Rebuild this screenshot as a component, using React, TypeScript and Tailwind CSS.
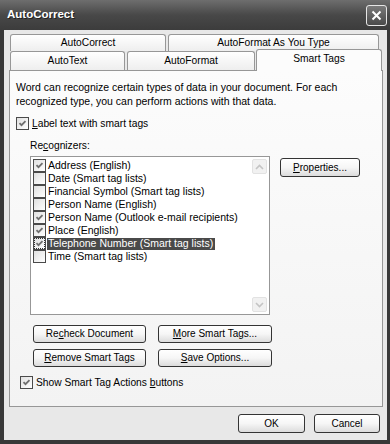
import type { ReactNode } from "react";

const recognizers = [
  { label: "Address (English)", checked: true },
  { label: "Date (Smart tag lists)", checked: false },
  { label: "Financial Symbol (Smart tag lists)", checked: false },
  { label: "Person Name (English)", checked: false },
  { label: "Person Name (Outlook e-mail recipients)", checked: true },
  { label: "Place (English)", checked: true },
  { label: "Telephone Number (Smart tag lists)", checked: true, selected: true },
  { label: "Time (Smart tag lists)", checked: false },
];

function CheckBox({ checked, focus }: { checked: boolean; focus?: boolean }) {
  return (
    <span
      className={`flex h-[13px] w-[13px] shrink-0 items-center justify-center border border-[#4a4a4a] bg-gradient-to-br from-[#e0e0e0] to-white ${
        focus ? "outline-1 outline-dotted outline-[#333] -outline-offset-2" : ""
      }`}
    >
      {checked && (
        <svg width="11" height="11" viewBox="0 0 11 11">
          <path d="M2.5 5.2 L4.5 7.2 L8.5 3.2" fill="none" stroke="#6e6e6e" strokeWidth="1.8" />
        </svg>
      )}
    </span>
  );
}

function Btn({ children, className = "" }: { children: ReactNode; className?: string }) {
  return (
    <button
      className={`flex shrink-0 items-center justify-center rounded-[3px] border border-[#343434] bg-gradient-to-b from-white via-[#f6f6f6] to-[#dcdcdc] text-[10px] leading-none text-black ${className}`}
    >
      {children}
    </button>
  );
}

function Tab({ children, className = "" }: { children: ReactNode; className?: string }) {
  return (
    <div
      className={`flex shrink-0 items-center justify-center rounded-t-[3px] border border-b-0 border-[#979797] bg-gradient-to-b from-white to-[#eeeeee] text-[10.25px] text-black ${className}`}
    >
      {children}
    </div>
  );
}

function ScrollArrow({ up }: { up?: boolean }) {
  return (
    <div className="flex h-[15px] w-[15px] items-center justify-center rounded-[2px] border border-[#e2e2e2] bg-[#f1f1f1]">
      <svg width="9" height="6" viewBox="0 0 9 6">
        <path
          d={up ? "M1 5 L4.5 1.5 L8 5" : "M1 1 L4.5 4.5 L8 1"}
          fill="none"
          stroke="#c4c4c4"
          strokeWidth="1.6"
        />
      </svg>
    </div>
  );
}

export default function App() {
  return (
    <div className="flex h-[444px] w-[390px] flex-col overflow-hidden bg-[#383838] font-['Liberation_Sans',Arial,sans-serif]">
      {/* title bar */}
      <div className="flex h-[30px] shrink-0 items-center justify-between bg-gradient-to-b from-[#6e6e6e] via-[#484848] to-[#3c3c3c] pl-[7px] pr-[3px]">
        <span className="text-[11.5px] font-bold text-white [text-shadow:1px_1px_0_#222]">
          AutoCorrect
        </span>
        <div className="flex h-[21px] w-[21px] items-center justify-center rounded-[3px] border border-[#e6e6e6] bg-gradient-to-b from-[#7a7a7a] to-[#4a4a4a]">
          <svg width="11" height="11" viewBox="0 0 11 11">
            <path d="M1.5 1.5 L9.5 9.5 M9.5 1.5 L1.5 9.5" stroke="white" strokeWidth="2" />
          </svg>
        </div>
      </div>

      {/* body */}
      <div className="mx-[4px] mb-[4px] mr-[3px] flex flex-1 flex-col bg-[#e8e8e8] pl-[5px] pr-[4px] pt-[4px]">
        {/* tab rows */}
        <div className="ml-[1px] flex h-[17px] gap-[2px]">
          <Tab className="w-[156px] pb-[1px]">AutoCorrect</Tab>
          <Tab className="w-[211px] pb-[1px]">AutoFormat As You Type</Tab>
        </div>
        <div className="ml-[1px] flex h-[19px] items-end">
          <Tab className="h-[19px] w-[115px]">AutoText</Tab>
          <Tab className="ml-[2px] h-[19px] w-[128px]">AutoFormat</Tab>
          <div className="relative z-10 mb-[-1px] ml-[1px] flex h-[22px] w-[126px] items-center justify-center rounded-t-[3px] border border-b-0 border-[#979797] bg-[#fcfcfc] pb-[3px] text-[10.25px] text-black">
            Smart Tags
          </div>
        </div>

        {/* panel */}
        <div className="flex h-[337px] w-[374px] shrink-0 flex-col border border-[#979797] bg-gradient-to-b from-[#fcfcfc] to-[#f3f3f3] pl-[6px] text-[10.25px] text-black">
          <p className="pt-[9px] text-[10.5px] leading-[14px]">
            Word can recognize certain types of data in your document. For each
            <br />
            recognized type, you can perform actions with that data.
          </p>
          <label className="mt-[9px] flex h-[13px] items-center gap-[3px]">
            <CheckBox checked />
            <span>
              <u>L</u>abel text with smart tags
            </span>
          </label>
          <div className="ml-[14px] mt-[9px] leading-[14px]">
            Re<u>c</u>ognizers:
          </div>
          <div className="mt-[3px] flex">
            <div className="ml-[14px] flex h-[159px] w-[240px] border border-[#979797] bg-white">
              <div className="flex flex-1 flex-col pl-[2px] pt-[2px] text-[10.5px]">
                {recognizers.map((r) => (
                  <div key={r.label} className="flex h-[13px] items-center">
                    <CheckBox checked={r.checked} focus={r.selected} />
                    <span
                      className={`ml-[1px] flex h-[12px] items-center whitespace-nowrap pl-[1px] pr-[2px] ${
                        r.selected ? "bg-[#4a4a4a] text-white" : ""
                      }`}
                    >
                      {r.label}
                    </span>
                  </div>
                ))}
              </div>
              <div className="flex w-[17px] shrink-0 flex-col justify-between py-[2px] pr-[1px]">
                <ScrollArrow up />
                <ScrollArrow />
              </div>
            </div>
            <Btn className="ml-[10px] mt-[2px] h-[19px] w-[80px]">
              <span>
                <u>P</u>roperties...
              </span>
            </Btn>
          </div>

          <div className="ml-[17px] mt-[10px] flex gap-[12px]">
            <Btn className="h-[18px] w-[113px]">
              <span>
                Re<u>c</u>heck Document
              </span>
            </Btn>
            <Btn className="h-[18px] w-[114px]">
              <span>
                <u>M</u>ore Smart Tags...
              </span>
            </Btn>
          </div>
          <div className="ml-[17px] mt-[6px] flex gap-[12px]">
            <Btn className="h-[18px] w-[113px]">
              <span>
                <u>R</u>emove Smart Tags
              </span>
            </Btn>
            <Btn className="h-[18px] w-[114px]">
              <span>
                <u>S</u>ave Options...
              </span>
            </Btn>
          </div>

          <label className="ml-[4px] mt-[9px] flex h-[13px] items-center gap-[3px]">
            <CheckBox checked />
            <span>
              Show Smart Tag Actions <u>b</u>uttons
            </span>
          </label>
        </div>

        {/* dialog buttons */}
        <div className="mt-[7px] flex justify-end gap-[9px] pr-[3px]">
          <Btn className="h-[19px] w-[67px]">OK</Btn>
          <Btn className="h-[19px] w-[66px]">Cancel</Btn>
        </div>
      </div>
    </div>
  );
}
